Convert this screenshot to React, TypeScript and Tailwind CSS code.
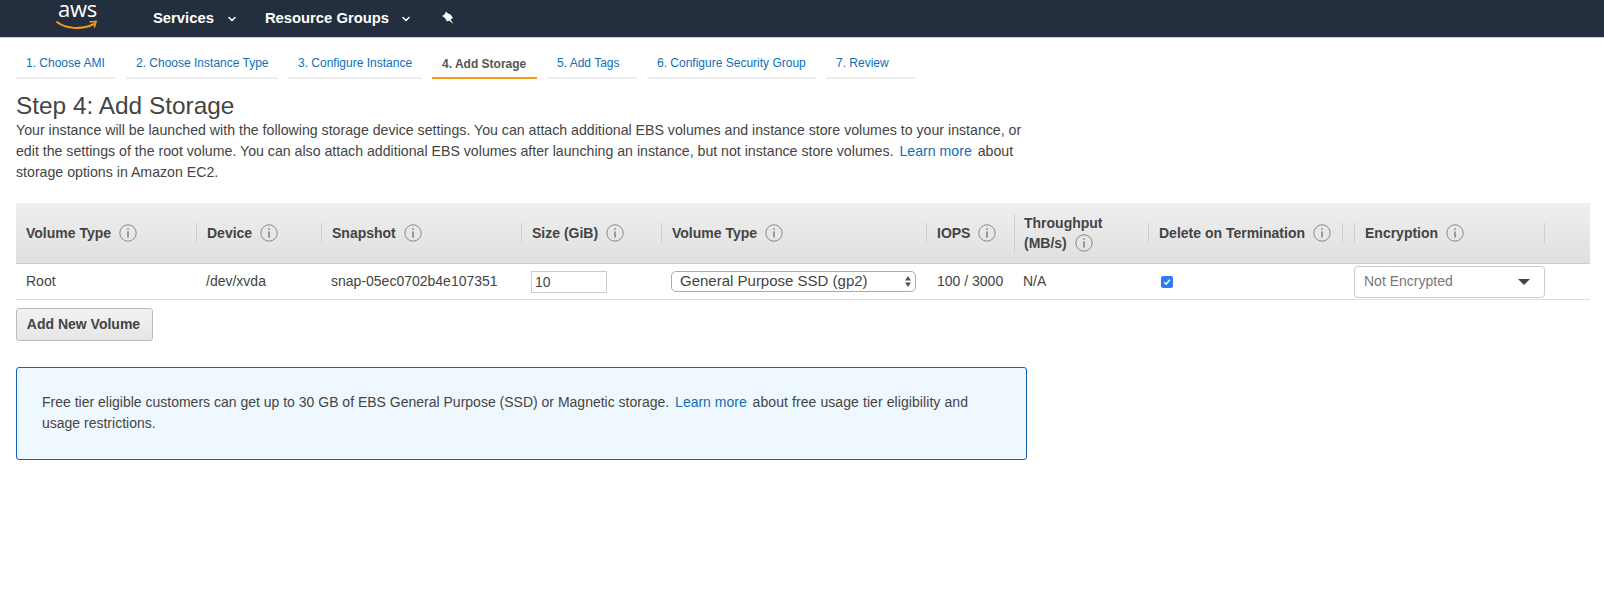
import { ChevronDown } from "lucide-react";

const tabs = [
  { label: "1. Choose AMI", width: "w-[100px]" },
  { label: "2. Choose Instance Type", width: "w-[152px]" },
  { label: "3. Configure Instance", width: "w-[134px]" },
  { label: "4. Add Storage", width: "w-[105px]", active: true },
  { label: "5. Add Tags", width: "w-[90px]" },
  { label: "6. Configure Security Group", width: "w-[169px]" },
  { label: "7. Review", width: "w-[90px]" },
];

const InfoIcon = () => (
  <svg className="w-[18px] h-[18px] shrink-0" viewBox="0 0 18 18" fill="none">
    <circle cx="9" cy="9" r="8.2" stroke="#888" strokeWidth="1" />
    <rect x="8.4" y="7.4" width="1.2" height="6.2" fill="#666" />
    <rect x="8.4" y="4.2" width="1.2" height="1.5" fill="#666" />
  </svg>
);

const HeaderCell = ({ label, multi }: { label: string; multi?: boolean }) => (
  <div className="flex items-center">
    <div className={`flex items-center border-l border-[#cfcfcf] pl-[10px] w-full ${multi ? "h-[39px]" : "h-[20px]"}`}>
      {multi ? (
        <div className="leading-[20px] -ml-[1px]">
          Throughput
          <div className="flex items-center gap-[8px]">
            (MB/s) <InfoIcon />
          </div>
        </div>
      ) : (
        <div className="flex items-center gap-[8px] whitespace-nowrap">
          {label} <InfoIcon />
        </div>
      )}
    </div>
  </div>
);

export default function App() {
  return (
    <div className="min-h-[597px] bg-white text-[#444] text-[14px] font-['Liberation_Sans',Arial,sans-serif]">
      {/* top nav */}
      <div className="h-[38px] bg-[#232f3e] border-b border-[#c9c9c9] flex items-center text-white font-bold text-[14.8px]">
        <div className="w-[153px] relative h-full">
          <span className="absolute left-[58px] top-[-2px] text-[22px] font-normal leading-[20px] font-['Open_Sans',sans-serif] tracking-[-0.3px]">aws</span>
          <svg className="absolute left-[56px] top-[20px]" width="42" height="11" viewBox="0 0 42 11" fill="none">
            <path d="M1 2 C 10 9, 26 10, 38 4" stroke="#f7981d" strokeWidth="2" strokeLinecap="round" />
            <path d="M34 2 L40 1.5 L38.5 7" stroke="#f7981d" strokeWidth="1.6" fill="none" strokeLinecap="round" />
          </svg>
        </div>
        <div className="flex items-center">
          Services
          <ChevronDown className="w-[12px] h-[12px] ml-[12px]" strokeWidth={3} />
        </div>
        <div className="flex items-center ml-[27px]">
          Resource Groups
          <ChevronDown className="w-[12px] h-[12px] ml-[11px]" strokeWidth={3} />
        </div>
        <svg className="ml-[29px]" width="14" height="15" viewBox="0 0 14 15" fill="#fff">
          <path d="M5 0.5 L7 2.5 L9.5 3.5 L12 7 L9.5 8.5 L12.5 13 L8 9.5 L6 10.5 L4 7 L1 5 L3.5 3.5 Z" />
        </svg>
      </div>

      {/* wizard tabs */}
      <div className="flex gap-[10px] pl-[16px] mt-[12px] text-[12px]">
        {tabs.map((t) => (
          <div
            key={t.label}
            className={`${t.width} h-[29px] pl-[10px] pt-[4px] border-b-2 whitespace-nowrap ${
              t.active ? "border-[#f7981d] text-[#555] font-bold pt-[5px]" : "border-[#eee] text-[#0f6fb8]"
            }`}
          >
            {t.label}
          </div>
        ))}
      </div>

      {/* step description */}
      <div className="px-[16px] mt-[14px]">
        <h1 className="text-[24.4px] leading-[26px] font-normal text-[#444]">Step 4: Add Storage</h1>
        <p className="w-[1022px] leading-[21px] mt-[1px] text-[14.16px]">
          Your instance will be launched with the following storage device settings. You can attach additional EBS volumes and instance store volumes to your instance, or edit the settings of the root volume. You can also attach additional EBS volumes after launching an instance, but not instance store volumes.{" "}
          <span className="text-[#0f6fb8] mx-[2px]">Learn more</span> about storage options in Amazon EC2.
        </p>
      </div>

      {/* volume table */}
      <div className="mr-[14px] ml-[16px] mt-[20px]">
        <div className="grid grid-cols-[180px_125px_200px_140px_265px_88px_134px_206px_236px] h-[61px] bg-gradient-to-b from-[#efefef] to-[#e0e0e0] border-b border-[#ccc] font-bold">
          <div className="flex items-center pl-[10px]">
            <div className="flex items-center gap-[8px]">Volume Type <InfoIcon /></div>
          </div>
          <HeaderCell label="Device" />
          <HeaderCell label="Snapshot" />
          <HeaderCell label="Size (GiB)" />
          <HeaderCell label="Volume Type" />
          <HeaderCell label="IOPS" />
          <HeaderCell label="Throughput" multi />
          <div className="flex items-center">
            <div className="flex items-center gap-[8px] border-l border-r border-[#cfcfcf] pl-[10px] h-[20px] w-[195px] whitespace-nowrap">
              Delete on Termination <InfoIcon />
            </div>
          </div>
          <div className="flex items-center">
            <div className="flex items-center gap-[8px] border-l border-r border-[#cfcfcf] pl-[10px] h-[20px] w-[191px]">
              Encryption <InfoIcon />
            </div>
          </div>
        </div>
        <div className="grid grid-cols-[180px_125px_200px_140px_265px_88px_134px_206px_236px] h-[36px] items-center border-b border-[#ddd]">
          <div className="pl-[10px]">Root</div>
          <div className="pl-[10px]">/dev/xvda</div>
          <div className="pl-[10px]">snap-05ec0702b4e107351</div>
          <div className="pl-[10px]">
            <div className="w-[76px] h-[22px] border border-[#ccc] pl-[3px] leading-[20px]">10</div>
          </div>
          <div className="pl-[10px]">
            <div className="w-[245px] h-[21px] border border-[#aaa] rounded-[5px] pl-[8px] pr-[3px] flex items-center justify-between text-[15px]">
              General Purpose SSD (gp2)
              <svg width="8" height="13" viewBox="0 0 8 13" fill="#555">
                <path d="M4 1 L7 5.5 H1 Z M4 12 L7 7.5 H1 Z" />
              </svg>
            </div>
          </div>
          <div className="pl-[11px]">100 / 3000</div>
          <div className="pl-[9px]">N/A</div>
          <div className="pl-[13px]">
            <div className="w-[12px] h-[12px] rounded-[2px] bg-[#2d7cf6] flex items-center justify-center">
              <svg width="8" height="8" viewBox="0 0 8 8" fill="none">
                <path d="M1.2 4.2 L3.2 6.2 L6.8 1.6" stroke="#fff" strokeWidth="1.5" />
              </svg>
            </div>
          </div>
          <div>
            <div className="w-[191px] h-[32px] border border-[#ccc] rounded-[4px] bg-white pl-[9px] pr-[14px] flex items-center justify-between text-[#777]">
              Not Encrypted
              <div className="w-0 h-0 border-l-[6px] border-r-[6px] border-t-[6px] border-l-transparent border-r-transparent border-t-[#444]" />
            </div>
          </div>
        </div>
      </div>

      <button className="block ml-[16px] mt-[8px] w-[137px] h-[33px] pr-[2px] rounded-[3px] border border-[#bbb] bg-gradient-to-b from-[#f2f2f2] to-[#e6e6e6] font-bold text-[#444]">
        Add New Volume
      </button>

      {/* free tier notice */}
      <div className="ml-[16px] mt-[26px] w-[1011px] h-[93px] border border-[#0f62b8] rounded-[3px] bg-[#f0f8ff] px-[25px] py-[24px] leading-[21px]">
        Free tier eligible customers can get up to 30 GB of EBS General Purpose (SSD) or Magnetic storage.{" "}
        <span className="text-[#0f6fb8] mx-[2px]">Learn more</span> <span className="tracking-[0.08px]">about free usage tier eligibility and</span> usage restrictions.
      </div>
    </div>
  );
}
